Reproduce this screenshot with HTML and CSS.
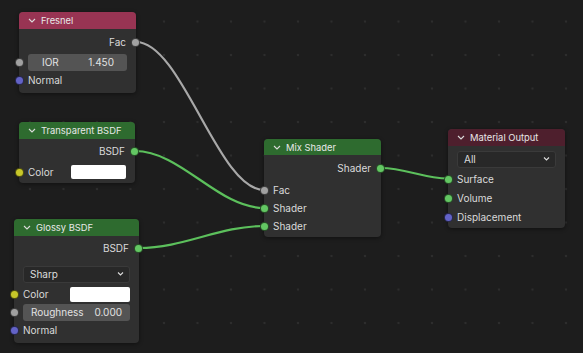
FILE: index.html
```html
<!DOCTYPE html>
<html lang="en">
<head>
  <meta charset="UTF-8">
  <title>Shader Editor</title>
  <link rel="stylesheet" href="styles.css">
</head>
<body>
  <div class="canvas">
    <svg class="links" width="583" height="353" viewBox="0 0 583 353">
      <path class="link grey" d="M136 42 C182 42, 218 190, 264 190"/>
      <path class="link green" d="M135 151 C181 151, 218 208, 264 208"/>
      <path class="link green" d="M139 248 C184 248, 219 226, 264 226"/>
      <path class="link green" d="M381 168 C405 168, 424 178.5, 448 178.5"/>
    </svg>

    <!-- Fresnel -->
    <div class="node" style="left:19px;top:12px;width:117px;">
      <div class="head head-input">
        <svg class="chev" width="8" height="5" viewBox="0 0 8 5"><polyline points="1,1 4,4 7,1"/></svg>
        Fresnel
      </div>
      <div class="body">
        <div class="row out"><span>Fac</span><i class="sock grey"></i></div>
        <div class="row in mt2"><i class="sock grey"></i>
          <div class="field ior"><span>IOR</span><span>1.450</span></div>
        </div>
        <div class="row in"><i class="sock blue"></i><span>Normal</span></div>
      </div>
    </div>

    <!-- Transparent BSDF -->
    <div class="node" style="left:19px;top:122px;width:116px;">
      <div class="head head-shader">
        <svg class="chev" width="8" height="5" viewBox="0 0 8 5"><polyline points="1,1 4,4 7,1"/></svg>
        Transparent BSDF
      </div>
      <div class="body pt3 pb2">
        <div class="row out"><span>BSDF</span><i class="sock green"></i></div>
        <div class="row in mt3"><i class="sock yellow"></i><span class="grow">Color</span><b class="swatch"></b></div>
      </div>
    </div>

    <!-- Glossy BSDF -->
    <div class="node" style="left:14px;top:219px;width:125px;">
      <div class="head head-shader">
        <svg class="chev" width="8" height="5" viewBox="0 0 8 5"><polyline points="1,1 4,4 7,1"/></svg>
        Glossy BSDF
      </div>
      <div class="body pt3">
        <div class="row out"><span>BSDF</span><i class="sock green"></i></div>
        <div class="row in mt8">
          <div class="select"><span>Sharp</span>
            <svg class="chev-s" width="7" height="4" viewBox="0 0 7 4"><polyline points="1,0.5 3.5,3 6,0.5"/></svg>
          </div>
        </div>
        <div class="row in mt2"><i class="sock yellow"></i><span class="grow">Color</span><b class="swatch wide"></b></div>
        <div class="row in"><i class="sock grey"></i>
          <div class="field rough"><span>Roughness</span><span>0.000</span></div>
        </div>
        <div class="row in"><i class="sock blue"></i><span>Normal</span></div>
      </div>
    </div>

    <!-- Mix Shader -->
    <div class="node" style="left:264px;top:139px;width:117px;">
      <div class="head head-shader short">
        <svg class="chev" width="8" height="5" viewBox="0 0 8 5"><polyline points="1,1 4,4 7,1"/></svg>
        Mix Shader
      </div>
      <div class="body pb2">
        <div class="row out"><span>Shader</span><i class="sock green"></i></div>
        <div class="row in mt4"><i class="sock grey"></i><span>Fac</span></div>
        <div class="row in"><i class="sock green"></i><span>Shader</span></div>
        <div class="row in"><i class="sock green"></i><span>Shader</span></div>
      </div>
    </div>

    <!-- Material Output -->
    <div class="node" style="left:448px;top:129px;width:117px;">
      <div class="head head-output">
        <svg class="chev" width="8" height="5" viewBox="0 0 8 5"><polyline points="1,1 4,4 7,1"/></svg>
        Material Output
      </div>
      <div class="body pb2">
        <div class="row in">
          <div class="select"><span>All</span>
            <svg class="chev-s" width="7" height="4" viewBox="0 0 7 4"><polyline points="1,0.5 3.5,3 6,0.5"/></svg>
          </div>
        </div>
        <div class="row in tall mt1"><i class="sock green"></i><span>Surface</span></div>
        <div class="row in tall"><i class="sock green"></i><span>Volume</span></div>
        <div class="row in tall"><i class="sock blue"></i><span>Displacement</span></div>
      </div>
    </div>
  </div>
</body>
</html>
```

FILE: styles.css
```css
html, body {
  margin: 0;
  padding: 0;
  background: #1d1d1d;
}

body {
  font-family: Inter, "Noto Sans", sans-serif;
  font-size: 10px;
  color: #dadada;
}

.canvas {
  position: relative;
  width: 583px;
  height: 353px;
  overflow: hidden;
  background-color: #1d1d1d;
  background-image: radial-gradient(circle, #2d2d2d 1px, transparent 1.6px);
  background-size: 33.5px 33.5px;
  background-position: 13.25px 4.75px;
}

.links {
  position: absolute;
  left: 0;
  top: 0;
}

.link {
  fill: none;
  stroke-width: 2.2;
}

.link.grey {
  stroke: #a8a8a8;
}

.link.green {
  stroke: #5cc05c;
}

.node {
  position: absolute;
  background: #303030;
  border-radius: 4px;
  box-shadow: 0 1px 4px rgba(0,0,0,0.45);
}

.head {
  height: 17px;
  display: flex;
  align-items: center;
  gap: 5px;
  padding-left: 9px;
  border-radius: 4px 4px 0 0;
  font-size: 9.4px;
  color: #e8e8e8;
}

.head.short {
  height: 16px;
}

.head-input {
  background: #983453;
}

.head-shader {
  background: #2e6b2f;
}

.head-output {
  background: #4e1f2d;
}

.chev polyline, .chev-s polyline {
  fill: none;
  stroke: #dcdcdc;
  stroke-width: 1.1;
}

.body {
  padding: 4px 0 4px;
}

.body.pt3 {
  padding-top: 3px;
}

.body.pb2 {
  padding-bottom: 2px;
}

.row {
  position: relative;
  height: 18px;
  display: flex;
  align-items: center;
}

.row.tall {
  height: 19px;
}

.row.out {
  justify-content: flex-end;
  padding-right: 10px;
}

.row.in {
  padding: 0 9px;
}

.mt1 { margin-top: 1px; }
.mt2 { margin-top: 2px; }
.mt3 { margin-top: 3px; }
.mt4 { margin-top: 4px; }
.mt8 { margin-top: 8px; }

.grow {
  flex: 1;
}

.sock {
  position: absolute;
  top: 50%;
  width: 7px;
  height: 7px;
  margin-top: -4px;
  border-radius: 50%;
  border: 0.5px solid rgba(0,0,0,0.6);
}

.row.out .sock {
  right: -4px;
}

.row.in .sock {
  left: -4px;
}

.sock.grey { background: #a1a1a1; }
.sock.green { background: #63c763; }
.sock.yellow { background: #c7c729; }
.sock.blue { background: #6363c7; }

.field {
  flex: 1;
  height: 17px;
  display: flex;
  align-items: center;
  justify-content: space-between;
  background: #545454;
  border-radius: 3px;
  color: #e2e2e2;
}

.field.ior {
  padding: 0 13px 0 14px;
}

.field.rough {
  padding: 0 8px;
}

.swatch {
  width: 55px;
  height: 14px;
  background: #ffffff;
  border-radius: 2px;
}

.swatch.wide {
  width: 60px;
  height: 15px;
}

.select {
  flex: 1;
  height: 15px;
  display: flex;
  align-items: center;
  justify-content: space-between;
  padding: 0 5px 0 6px;
  background: #282828;
  border: 1px solid #3a3a3a;
  border-radius: 3px;
  color: #dcdcdc;
}
```
